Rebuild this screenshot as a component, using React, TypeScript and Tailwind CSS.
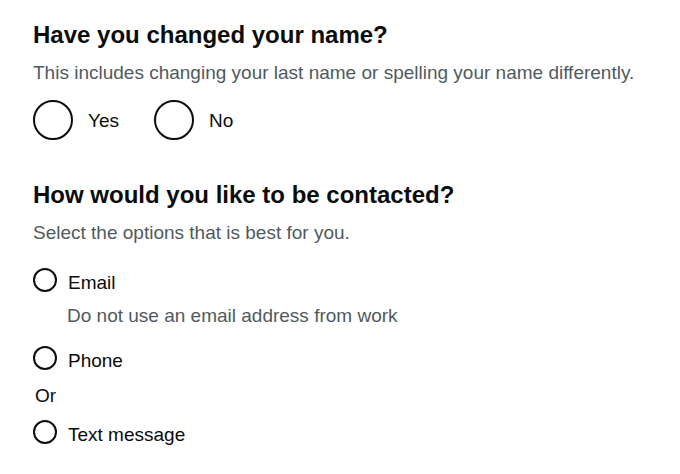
import React from "react";

function BigRadio({ label }: { label: string }) {
  return (
    <div className="flex items-center">
      <span className="block w-[40px] h-[40px] rounded-full border-2 border-[#0b0c0c] bg-white" />
      <span className="ml-[15px] text-[19px] leading-[25px] text-[#0b0c0c]">{label}</span>
    </div>
  );
}

function SmallRadio({ label }: { label: string }) {
  return (
    <div className="flex items-start">
      <span className="block w-[24px] h-[24px] rounded-full border-2 border-[#0b0c0c] bg-white shrink-0" />
      <span className="ml-[11px] mt-[2px] text-[19px] leading-[25px] text-[#0b0c0c]">{label}</span>
    </div>
  );
}

export default function App() {
  return (
    <div
      className="w-[680px] h-[474px] bg-white pl-[33px] pt-[20px] overflow-hidden"
      style={{ fontFamily: '"Liberation Sans", Arial, sans-serif' }}
    >
      <h2 className="text-[24px] leading-[30px] font-bold text-[#0b0c0c]">Have you changed your name?</h2>
      <p className="mt-[10px] text-[19px] leading-[25px] text-[#505a5f]">
        This includes changing your last name or spelling your name differently.
      </p>
      <div className="mt-[15px] flex gap-[35px]">
        <BigRadio label="Yes" />
        <BigRadio label="No" />
      </div>

      <h2 className="mt-[40px] text-[24px] leading-[30px] font-bold text-[#0b0c0c]">
        How would you like to be contacted?
      </h2>
      <p className="mt-[10px] text-[19px] leading-[25px] text-[#505a5f]">Select the options that is best for you.</p>

      <div className="mt-[23px]">
        <SmallRadio label="Email" />
        <p className="ml-[34px] mt-[8px] text-[19px] leading-[25px] text-[#505a5f]">Do not use an email address from work</p>
        <div className="mt-[18px]">
          <SmallRadio label="Phone" />
        </div>
        <p className="ml-[2px] mt-[10px] text-[19px] leading-[25px] text-[#0b0c0c]">Or</p>
        <div className="mt-[12px]">
          <SmallRadio label="Text message" />
        </div>
      </div>
    </div>
  );
}
